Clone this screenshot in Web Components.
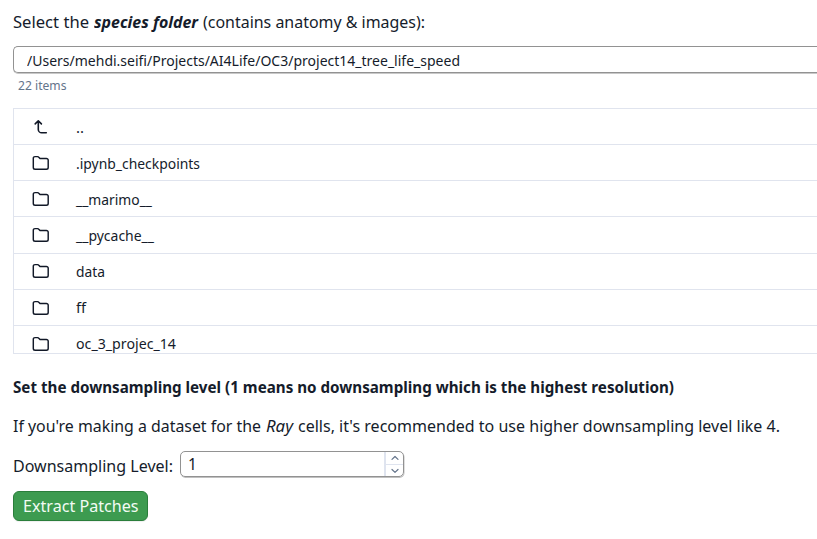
<!DOCTYPE html>
<html lang="en">
<head>
<meta charset="utf-8">
<title>Species folder</title>
<style>
html,body{margin:0;background:#fff;overflow:hidden}
body{width:817px;height:539px;font-family:"Noto Sans","Open Sans",sans-serif;color:#151c2b}
</style>
</head>
<body>
<patch-form></patch-form>
<script>
/* A run of text condensed to a given advance width. */
class FitText extends HTMLElement {
  connectedCallback() {
    const root = this.attachShadow({mode: "open"});
    root.innerHTML = `<style>
      :host{display:block;flex:none;white-space:pre}
      span{display:inline-block;transform-origin:0 50%}
    </style><span><slot></slot></span>`;
    const w = Number(this.getAttribute("w"));
    this.style.width = w + "px";
    const span = root.querySelector("span");
    const natural = span.offsetWidth ? span.getBoundingClientRect().width : w;
    span.style.transform = `scaleX(${w / natural})`;
  }
}

class FolderIcon extends HTMLElement {
  connectedCallback() {
    const up = this.hasAttribute("up");
    this.attachShadow({mode: "open"}).innerHTML = `<style>
      :host{display:block;width:18px;height:18px;flex:none}
      svg{display:block;fill:none;stroke:#111827;stroke-width:1.45;stroke-linecap:round;stroke-linejoin:round}
    </style><svg width="18" height="18" viewBox="0 0 18 18">${up
      ? '<path stroke-width="1.6" d="M3.2 5.9 6.3 2.8l3.1 3.1M6.3 3v8.4a3.4 3.4 0 0 0 3.4 3.4h4.6"/>'
      : '<path d="M1.3 4.3a1.7 1.7 0 0 1 1.7-1.7h2.5c.5 0 1 .2 1.3.6l1.2 1.3h6.4a1.8 1.8 0 0 1 1.8 1.8v7.1a1.8 1.8 0 0 1-1.8 1.8H3.1a1.8 1.8 0 0 1-1.8-1.8z"/>'}</svg>`;
  }
}

class FileRow extends HTMLElement {
  connectedCallback() {
    this.attachShadow({mode: "open"}).innerHTML = `<style>
      :host{display:flex;align-items:flex-start;box-sizing:border-box;height:36.15px;padding-left:18px;border-bottom:1px solid #e0e4ee}
      folder-icon{margin-top:8.8px}
      fit-text{margin:5.6px 0 0 25.8px;font-size:14.7px;line-height:24px}
    </style><folder-icon ${this.hasAttribute("up") ? "up" : ""}></folder-icon>
    <fit-text w="${this.getAttribute("w")}">${this.getAttribute("name")}</fit-text>`;
  }
}

class FileList extends HTMLElement {
  connectedCallback() {
    this.attachShadow({mode: "open"}).innerHTML = `<style>
      :host{display:block;box-sizing:border-box;height:246px;overflow:hidden;border:1px solid #e0e4ee;border-right:0}
    </style><slot></slot>`;
  }
}

class NumberField extends HTMLElement {
  connectedCallback() {
    this.attachShadow({mode: "open"}).innerHTML = `<style>
      :host{display:flex;box-sizing:border-box;width:224px;height:26px;border:1px solid #929292;border-radius:5px;box-shadow:.5px 1px 0 #c0c0c0;overflow:hidden}
      .value{flex:1;padding-left:7px;font-size:15.5px;line-height:24px}
      .steps{width:17px;border-left:2px solid #dfe4ef;display:grid;grid-template-rows:12px 1px 11px}
      .steps i{background:#dfe4ef}
      svg{display:block;margin:auto;fill:none;stroke:#64748b;stroke-width:1.2;stroke-linecap:round;stroke-linejoin:round}
    </style><div class="value"><slot></slot></div>
    <div class="steps"><svg width="8" height="6"><path d="M1 4.4 4 1.5l3 2.9"/></svg><i></i><svg width="8" height="6"><path d="M1 1.5 4 4.4l3-2.9"/></svg></div>`;
  }
}

class ActionButton extends HTMLElement {
  connectedCallback() {
    this.attachShadow({mode: "open"}).innerHTML = `<style>
      :host{display:block;box-sizing:border-box;width:135px;height:30px;padding-left:9px;border:1px solid #2a7e3b;border-radius:6px;background:#3d9b50;color:#f3fbf4;font-size:16.8px;line-height:28px;box-shadow:0 1px 1px #0001}
    </style><slot></slot>`;
  }
}

class PatchForm extends HTMLElement {
  connectedCallback() {
    this.attachShadow({mode: "open"}).innerHTML = `<style>
      :host{display:flex;flex-direction:column;height:539px;padding:8px 0 0 13px;box-sizing:border-box;font-size:16.8px;line-height:28px}
      .line{display:flex;height:28px}
      .line>*+*{margin-left:5px}
      .path{box-sizing:border-box;height:27px;margin-top:10px;padding-left:13px;border:1px solid #929292;border-right:0;border-radius:5px 0 0 5px;box-shadow:0 1px 0 #c8c8c8;font-size:14.7px;line-height:26px}
      .count{margin:4px 0 0 4.5px;font-size:12.2px;line-height:18px;color:#64748b}
      file-list{margin-top:13px}
      .heading{margin-top:19px;font-weight:700}
      .hint{margin-top:11px}
      .level{margin-top:11px;align-items:flex-start}
      .level fit-text{margin-top:1px}
      .level number-field{margin-left:7px}
      action-button{margin-top:12px}
    </style>
    <div class="line"><fit-text w="76">Select the</fit-text><fit-text w="104" style="font-weight:700;font-style:italic">species folder</fit-text><fit-text w="222">(contains anatomy &amp; images):</fit-text></div>
    <div class="path"><fit-text w="433">/Users/mehdi.seifi/Projects/AI4Life/OC3/project14_tree_life_speed</fit-text></div>
    <fit-text class="count" w="48.5">22 items</fit-text>
    <file-list>
      <file-row up name=".." w="8"></file-row>
      <file-row name=".ipynb_checkpoints" w="124"></file-row>
      <file-row name="__marimo__" w="76"></file-row>
      <file-row name="__pycache__" w="78"></file-row>
      <file-row name="data" w="29"></file-row>
      <file-row name="ff" w="10"></file-row>
      <file-row name="oc_3_projec_14" w="100"></file-row>
    </file-list>
    <fit-text class="heading" w="661">Set the downsampling level (1 means no downsampling which is the highest resolution)</fit-text>
    <div class="line hint"><fit-text w="248">If you're making a dataset for the</fit-text><fit-text w="27" style="font-style:italic">Ray</fit-text><fit-text w="482">cells, it's recommended to use higher downsampling level like 4.</fit-text></div>
    <div class="line level"><fit-text w="160">Downsampling Level:</fit-text><number-field>1</number-field></div>
    <action-button><fit-text w="115.5">Extract Patches</fit-text></action-button>`;
  }
}

customElements.define("fit-text", FitText);
customElements.define("folder-icon", FolderIcon);
customElements.define("file-row", FileRow);
customElements.define("file-list", FileList);
customElements.define("number-field", NumberField);
customElements.define("action-button", ActionButton);
customElements.define("patch-form", PatchForm);
</script>
</body>
</html>
